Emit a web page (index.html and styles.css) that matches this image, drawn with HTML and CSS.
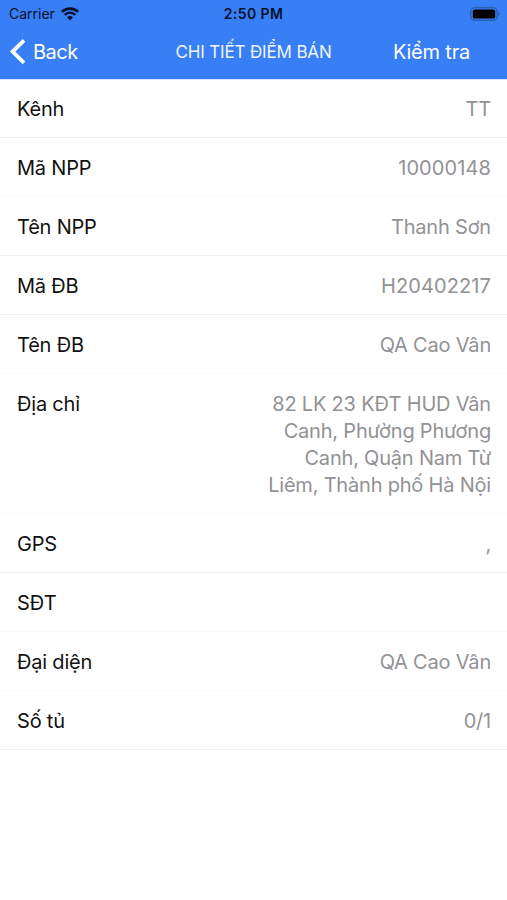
FILE: index.html
```
<!DOCTYPE html>
<html lang="vi">
<head>
  <meta charset="UTF-8">
  <meta name="viewport" content="width=device-width, initial-scale=1">
  <title>Chi tiết điểm bán</title>
  <link rel="stylesheet" href="styles.css">
</head>
<body>

  <!-- Header -->
  <div class="header">
    <div class="status-bar">
      <div class="carrier">
        <span>Carrier</span>
        <svg class="wifi" width="18" height="14" viewBox="0 0 18 14">
          <path d="M0.9 4.9a11.5 11.5 0 0 1 16.2 0" fill="none" stroke="#06112b" stroke-width="2.7"/>
          <path d="M3.7 7.9a7.5 7.5 0 0 1 10.6 0" fill="none" stroke="#06112b" stroke-width="2.3"/>
          <path d="M9 13.2L6.1 10.4a4.1 4.1 0 0 1 5.8 0z" fill="#06112b"/>
        </svg>
      </div>
      <div class="time">2:50 PM</div>
      <svg class="battery" width="31" height="14" viewBox="0 0 31 14">
        <rect x="0.8" y="0.8" width="26.4" height="12.4" rx="3.8" fill="none" stroke="#265199" stroke-width="1.1"/>
        <rect x="2.8" y="2.5" width="22.4" height="9" rx="1.6" fill="#000"/>
        <path d="M28.7 4.8q2.2 2.2 0 4.4z" fill="#265199"/>
      </svg>
    </div>
    <div class="nav-bar">
      <div class="back">
        <svg width="17" height="26" viewBox="0 0 17 26">
          <path d="M15 1.4L3.6 12.6l11.4 11.2" fill="none" stroke="#fff" stroke-width="3.8"/>
        </svg>
        <span>Back</span>
      </div>
      <div class="title">CHI TIẾT ĐIỂM BÁN</div>
      <div class="action">Kiểm tra</div>
    </div>
  </div>

  <!-- Details -->
  <div class="list">
    <div class="row">
      <div class="label">Kênh</div>
      <div class="value">TT</div>
    </div>
    <div class="row light">
      <div class="label">Mã NPP</div>
      <div class="value code">10000148</div>
    </div>
    <div class="row">
      <div class="label">Tên NPP</div>
      <div class="value">Thanh Sơn</div>
    </div>
    <div class="row">
      <div class="label">Mã ĐB</div>
      <div class="value code">H20402217</div>
    </div>
    <div class="row light">
      <div class="label">Tên ĐB</div>
      <div class="value">QA Cao Vân</div>
    </div>
    <div class="row light">
      <div class="label">Địa chỉ</div>
      <div class="value">82 LK 23 KĐT HUD Vân Canh, Phường Phương Canh, Quận Nam Từ Liêm, Thành phố Hà Nội</div>
    </div>
    <div class="row">
      <div class="label">GPS</div>
      <div class="value">,</div>
    </div>
    <div class="row light">
      <div class="label">SĐT</div>
      <div class="value"></div>
    </div>
    <div class="row light">
      <div class="label">Đại diện</div>
      <div class="value">QA Cao Vân</div>
    </div>
    <div class="row">
      <div class="label">Số tủ</div>
      <div class="value">0/1</div>
    </div>
  </div>

</body>
</html>
```
FILE: styles.css
```
body {
  margin: 0;
  font-family: Inter, Roboto, sans-serif;
  background-color: #fff;
  color: #111;
}

.header {
  height: 79px;
  background-color: #387ef5;
  box-shadow: 0 1px 0 #d5e4fd;
}

.status-bar {
  display: grid;
  grid-template-columns: 1fr auto 1fr;
  align-items: center;
  height: 27px;
  padding: 0 6px 0 9px;
  color: #06112b;
}

.carrier {
  display: flex;
  align-items: center;
  gap: 6px;
  font-size: 14px;
}

.time {
  margin-right: 3px;
  font-size: 14px;
  font-weight: 600;
  letter-spacing: 0.4px;
}

.battery {
  justify-self: end;
}

/* Navigation bar */
.nav-bar {
  display: grid;
  grid-template-columns: 166px 1fr 166px;
  align-items: center;
  height: 50px;
  color: #fff;
  font-size: 20px;
  letter-spacing: -0.2px;
}

.back {
  display: flex;
  align-items: center;
  gap: 7px;
  padding-left: 9px;
  letter-spacing: -0.5px;
}

.title {
  text-align: center;
  font-size: 17px;
  color: #f0f5ff;
  letter-spacing: -0.15px;
  white-space: nowrap;
}

.action {
  padding-right: 37px;
  text-align: right;
}

/* Detail rows */
.row {
  display: flex;
  justify-content: space-between;
  padding: 17px 16px 14px 17px;
  border-bottom: 1px solid #f1f1f2;
  font-size: 20px;
  line-height: 27px;
  letter-spacing: -0.2px;
}

.row.light {
  border-bottom-color: #fafafa;
}

.label {
  flex-shrink: 0;
}

.value {
  width: 236px;
  color: #929295;
  text-align: right;
}

.value.code {
  letter-spacing: 0.1px;
}
```
